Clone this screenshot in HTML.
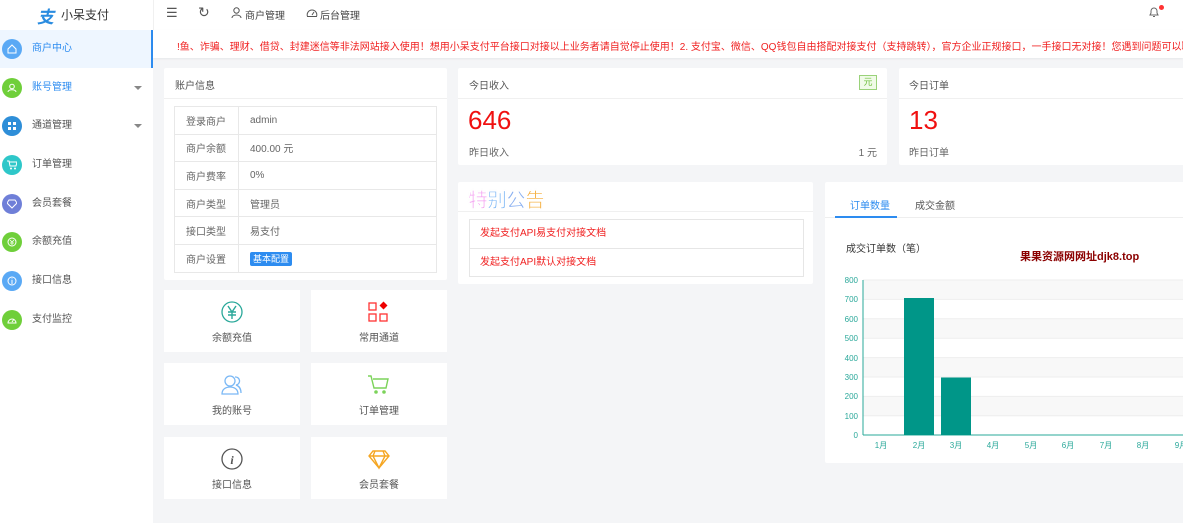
<!DOCTYPE html>
<html><head><meta charset="utf-8"><style>
*{margin:0;padding:0;box-sizing:border-box}
body{width:1183px;height:523px;overflow:hidden;background:#f4f5f7;font-family:"Liberation Sans","Noto Sans CJK SC",sans-serif;font-size:10px;color:#555;position:relative}
.a{position:absolute}
.card{position:absolute;background:#fff;border-radius:2px}
.side{left:0;top:0;width:153px;height:523px;background:#fff}
.item{position:absolute;left:0;width:153px;height:38px;line-height:38px;padding-left:32px;color:#555;font-size:10px}
.item .ic{position:absolute;left:2px;top:9px;width:20px;height:20px;border-radius:50%}
.item .ic svg{position:absolute;left:5px;top:5px}
.item .ar{position:absolute;right:11px;top:17px;border:4px solid transparent;border-top:4px solid #888;border-bottom:0}
table{border-collapse:collapse}
td{border:1px solid #e8e8e8;height:27.6px;padding-left:11px;font-size:10px;color:#666}
.sc{position:absolute;background:#fff;width:136px;height:62px;text-align:center;font-size:10px;color:#555}
.sc svg{position:absolute;left:57px;top:11px}
.sc span{position:absolute;left:0;right:0;top:39px}
</style></head><body>
<div class="a side">
 <div class="a" style="left:37px;top:3px;font-size:17px;color:#2a8ce0;font-weight:bold;font-style:italic">支</div>
 <div class="a" style="left:61px;top:6px;font-size:12px;color:#333">小呆支付</div>
 <div class="item" style="top:30px;background:#eef6ff;color:#2d8cf0;border-right:2px solid #2d8cf0"><i class="ic" style="background:#5aa9f5"><svg width="10" height="10"><path d="M1 5l4-4 4 4v4H1z" fill="none" stroke="#fff"/></svg></i>商户中心</div>
 <div class="item" style="top:69px;color:#2d8cf0"><i class="ic" style="background:#6fcf3a"><svg width="10" height="10"><circle cx="5" cy="3.5" r="2.3" fill="none" stroke="#fff"/><path d="M1 9c0-3 8-3 8 0" fill="none" stroke="#fff"/></svg></i>账号管理<i class="ar"></i></div>
 <div class="item" style="top:107px"><i class="ic" style="background:#2e8ed8"><svg width="10" height="10"><rect x="1" y="1" width="3" height="3" fill="#fff"/><rect x="6" y="1" width="3" height="3" fill="#fff"/><rect x="1" y="6" width="3" height="3" fill="#fff"/><rect x="6" y="6" width="3" height="3" fill="#fff"/></svg></i>通道管理<i class="ar"></i></div>
 <div class="item" style="top:146px"><i class="ic" style="background:#2ec7c9"><svg width="10" height="10"><path d="M0 1h2l1 5h6l1-4H2" fill="none" stroke="#fff"/><circle cx="4" cy="8.5" r="1" fill="#fff"/><circle cx="8" cy="8.5" r="1" fill="#fff"/></svg></i>订单管理</div>
 <div class="item" style="top:185px"><i class="ic" style="background:#6f7fd8"><svg width="10" height="10"><path d="M2 1h6l2 3-5 5-5-5z" fill="none" stroke="#fff"/></svg></i>会员套餐</div>
 <div class="item" style="top:223px"><i class="ic" style="background:#6fcf3a"><svg width="10" height="10"><circle cx="5" cy="5" r="4" fill="none" stroke="#fff"/><path d="M3 3l2 2 2-2M5 5v3M3 6h4" fill="none" stroke="#fff" stroke-width=".8"/></svg></i>余额充值</div>
 <div class="item" style="top:262px"><i class="ic" style="background:#5aa9f5"><svg width="10" height="10"><circle cx="5" cy="5" r="4" fill="none" stroke="#fff"/><path d="M5 4v4M5 2.5v.8" stroke="#fff"/></svg></i>接口信息</div>
 <div class="item" style="top:301px"><i class="ic" style="background:#6fcf3a"><svg width="10" height="10"><path d="M1 8a4 4 0 1 1 8 0z" fill="none" stroke="#fff"/><path d="M5 7l2-3" stroke="#fff"/></svg></i>支付监控</div>
</div>
<div class="a" style="left:153px;top:0;width:1030px;height:30px;background:#fff;border-left:1px solid #f0f0f0"></div>
<div class="a" style="left:166px;top:5px;font-size:13px;color:#555">☰</div>
<div class="a" style="left:198px;top:4px;font-size:14px;color:#555">↻</div>
<svg class="a" style="left:231px;top:7px" width="11" height="11"><circle cx="5.5" cy="3.5" r="2.7" fill="none" stroke="#555"/><path d="M1 11c0-4 9-4 9 0" fill="none" stroke="#555"/></svg>
<div class="a" style="left:245px;top:7px;font-size:10px;color:#444">商户管理</div>
<svg class="a" style="left:306px;top:7px" width="12" height="11"><path d="M1.5 9.5a4.8 4.8 0 1 1 9 0z" fill="none" stroke="#555"/><path d="M6 8l2-3" stroke="#555"/></svg>
<div class="a" style="left:320px;top:7px;font-size:10px;color:#444">后台管理</div>
<svg class="a" style="left:1148px;top:6px" width="12" height="12"><path d="M2 9h8l-1-2V5a3 3 0 0 0-6 0v2z M5 10.5h2" fill="none" stroke="#666"/></svg>
<div class="a" style="left:1159px;top:5px;width:5px;height:5px;border-radius:50%;background:#f33"></div>
<div class="a" style="left:153px;top:30px;width:1030px;height:28px;background:#fff;box-shadow:0 1px 2px rgba(0,0,0,.06);overflow:hidden;white-space:nowrap">
 <div class="a" style="left:24px;top:8px;font-size:10px;color:#f02020">!鱼、诈骗、理财、借贷、封建迷信等非法网站接入使用！想用小呆支付平台接口对接以上业务者请自觉停止使用！2. 支付宝、微信、QQ钱包自由搭配对接支付（支持跳转），官方企业正规接口，一手接口无对接！您遇到问题可以联系客服</div>
</div>
<div class="card" style="left:164px;top:68px;width:283px;height:212px">
 <div class="a" style="left:11px;top:9px;color:#555">账户信息</div>
 <div class="a" style="left:0;top:30px;width:283px;border-top:1px solid #f0f0f0"></div>
 <table class="a" style="left:10px;top:38px;width:263px">
  <tr><td style="width:64px">登录商户</td><td>admin</td></tr>
  <tr><td>商户余额</td><td>400.00 元</td></tr>
  <tr><td>商户费率</td><td>0%</td></tr>
  <tr><td>商户类型</td><td>管理员</td></tr>
  <tr><td>接口类型</td><td>易支付</td></tr>
  <tr><td>商户设置</td><td><span style="background:#2d8cf0;color:#fff;padding:2px 3px;border-radius:2px;font-size:9px">基本配置</span></td></tr>
 </table>
</div>
<div class="sc" style="left:164px;top:290px"><svg width="22" height="22" viewBox="0 0 22 22"><circle cx="11" cy="11" r="10" fill="none" stroke="#2aa89a" stroke-width="1.3"/><path d="M7 5l4 6 4-6M11 11v7M7 11h8M7 14h8" fill="none" stroke="#2aa89a" stroke-width="1.4"/></svg><span>余额充值</span></div>
<div class="sc" style="left:311px;top:290px"><svg width="22" height="22" viewBox="0 0 22 22"><rect x="1" y="2" width="7" height="7" fill="none" stroke="#f33" stroke-width="1.3"/><rect x="1" y="13" width="7" height="7" fill="none" stroke="#f33" stroke-width="1.3"/><rect x="12" y="13" width="7" height="7" fill="none" stroke="#f33" stroke-width="1.3"/><path d="M15.5 0.5l4 4-4 4-4-4z" fill="#e00"/></svg><span>常用通道</span></div>
<div class="sc" style="left:164px;top:363px"><svg width="22" height="22" viewBox="0 0 22 22"><circle cx="9" cy="7" r="5" fill="none" stroke="#7ab8f5" stroke-width="1.3"/><path d="M1 20c0-5 4-7 8-7s8 2 8 7z" fill="none" stroke="#7ab8f5" stroke-width="1.3"/><path d="M14 3a4 4 0 0 1 1 8c3 1 5 3 5 8" fill="none" stroke="#7ab8f5" stroke-width="1.3"/></svg><span>我的账号</span></div>
<div class="sc" style="left:311px;top:363px"><svg width="22" height="22" viewBox="0 0 22 22"><path d="M0 2h3l3 12h12l2-9H5" fill="none" stroke="#7cd35a" stroke-width="1.4"/><circle cx="8" cy="18" r="1.8" fill="#7cd35a"/><circle cx="16" cy="18" r="1.8" fill="#7cd35a"/></svg><span>订单管理</span></div>
<div class="sc" style="left:164px;top:437px"><svg width="22" height="22" viewBox="0 0 22 22"><circle cx="11" cy="11" r="10" fill="none" stroke="#555" stroke-width="1.3"/><text x="11" y="16" text-anchor="middle" font-size="12" font-style="italic" font-weight="bold" fill="#555" font-family="Liberation Serif,serif">i</text></svg><span>接口信息</span></div>
<div class="sc" style="left:311px;top:437px"><svg width="22" height="22" viewBox="0 0 22 22"><path d="M5 3h12l4 5-10 12L1 8z M1 8h20 M7 3l-2 5 6 12 6-12-2-5" fill="none" stroke="#f5a623" stroke-width="1.4"/></svg><span>会员套餐</span></div>
<div class="card" style="left:458px;top:68px;width:429px;height:97px">
 <div class="a" style="left:11px;top:9px">今日收入</div>
 <div class="a" style="left:401px;top:7px;width:18px;height:15px;border:1px solid #9ad27a;background:#f0fbe8;color:#6cbf3c;font-size:9px;text-align:center;line-height:13px">元</div>
 <div class="a" style="left:0;top:30px;width:429px;border-top:1px solid #f0f0f0"></div>
 <div class="a" style="left:10px;top:37px;font-size:26px;color:#f01010">646</div>
 <div class="a" style="left:11px;top:76px;color:#666">昨日收入</div>
 <div class="a" style="right:10px;top:76px;color:#666">1 元</div>
</div>
<div class="card" style="left:899px;top:68px;width:290px;height:97px">
 <div class="a" style="left:10px;top:9px">今日订单</div>
 <div class="a" style="left:0;top:30px;width:290px;border-top:1px solid #f0f0f0"></div>
 <div class="a" style="left:10px;top:37px;font-size:26px;color:#f01010">13</div>
 <div class="a" style="left:10px;top:76px;color:#666">昨日订单</div>
</div>
<div class="card" style="left:458px;top:182px;width:355px;height:102px">
 <div class="a" style="left:10px;top:2px;font-size:20px;font-weight:bold;letter-spacing:-1px;-webkit-text-stroke:1.5px #fff;text-shadow:0 0 1px #aaa"><span style="color:#f39cf0">特</span><span style="color:#7fb8f5">别</span><span style="color:#8ab0f0">公</span><span style="color:#f5b44a">告</span></div>
 <div class="a" style="left:0;top:29px;width:355px;border-top:1px solid #f0f0f0"></div>
 <div class="a" style="left:11px;top:37px;width:335px;height:58px;border:1px solid #e6e6e6">
  <div style="height:29px;line-height:28px;padding-left:10px;border-bottom:1px solid #e6e6e6;color:#f02020">发起支付API易支付对接文档</div>
  <div style="height:28px;line-height:28px;padding-left:10px;color:#f02020">发起支付API默认对接文档</div>
 </div>
</div>
<div class="card" style="left:825px;top:182px;width:370px;height:281px">
 <div class="a" style="left:25px;top:15px;color:#2d8cf0">订单数量</div>
 <div class="a" style="left:90px;top:15px;color:#555">成交金额</div>
 <div class="a" style="left:0;top:35px;width:370px;border-top:1px solid #eee"></div>
 <div class="a" style="left:10px;top:34px;width:62px;height:2px;background:#2d8cf0"></div>
 <div class="a" style="left:21px;top:58px;color:#333">成交订单数（笔）</div>
 <div class="a" style="left:195px;top:66px;color:#8b0000;font-weight:bold;font-size:11px">果果资源网网址djk8.top</div>
</div>
<svg class="a" style="left:825px;top:270px" width="358" height="190">
 <g font-size="8" fill="#2aa89a" font-family="Liberation Sans,sans-serif" text-anchor="end">
  <rect x="38" y="10" width="320" height="19.4" fill="#f8f8f8"/>
  <rect x="38" y="48.8" width="320" height="19.4" fill="#f8f8f8"/>
  <rect x="38" y="87.6" width="320" height="19.4" fill="#f8f8f8"/>
  <rect x="38" y="126.4" width="320" height="19.4" fill="#f8f8f8"/>
  <g stroke="#eee"><line x1="38" x2="358" y1="10" y2="10"/><line x1="38" x2="358" y1="29.4" y2="29.4"/><line x1="38" x2="358" y1="48.8" y2="48.8"/><line x1="38" x2="358" y1="68.2" y2="68.2"/><line x1="38" x2="358" y1="87.6" y2="87.6"/><line x1="38" x2="358" y1="107" y2="107"/><line x1="38" x2="358" y1="126.4" y2="126.4"/><line x1="38" x2="358" y1="145.8" y2="145.8"/></g>
  <text x="33" y="13">800</text><text x="33" y="32">700</text><text x="33" y="52">600</text><text x="33" y="71">500</text><text x="33" y="91">400</text><text x="33" y="110">300</text><text x="33" y="129">200</text><text x="33" y="149">100</text><text x="33" y="168">0</text>
  <line x1="38" x2="38" y1="10" y2="165" stroke="#2aa89a"/>
  <line x1="38" x2="358" y1="165" y2="165" stroke="#2aa89a"/>
  <rect x="79" y="28" width="30" height="137" fill="#009688"/>
  <rect x="116" y="107.5" width="30" height="57.5" fill="#009688"/>
  <g text-anchor="middle"><text x="56" y="178">1月</text><text x="94" y="178">2月</text><text x="131" y="178">3月</text><text x="168" y="178">4月</text><text x="206" y="178">5月</text><text x="243" y="178">6月</text><text x="281" y="178">7月</text><text x="318" y="178">8月</text><text x="356" y="178">9月</text></g>
 </g>
</svg>
</body></html>
